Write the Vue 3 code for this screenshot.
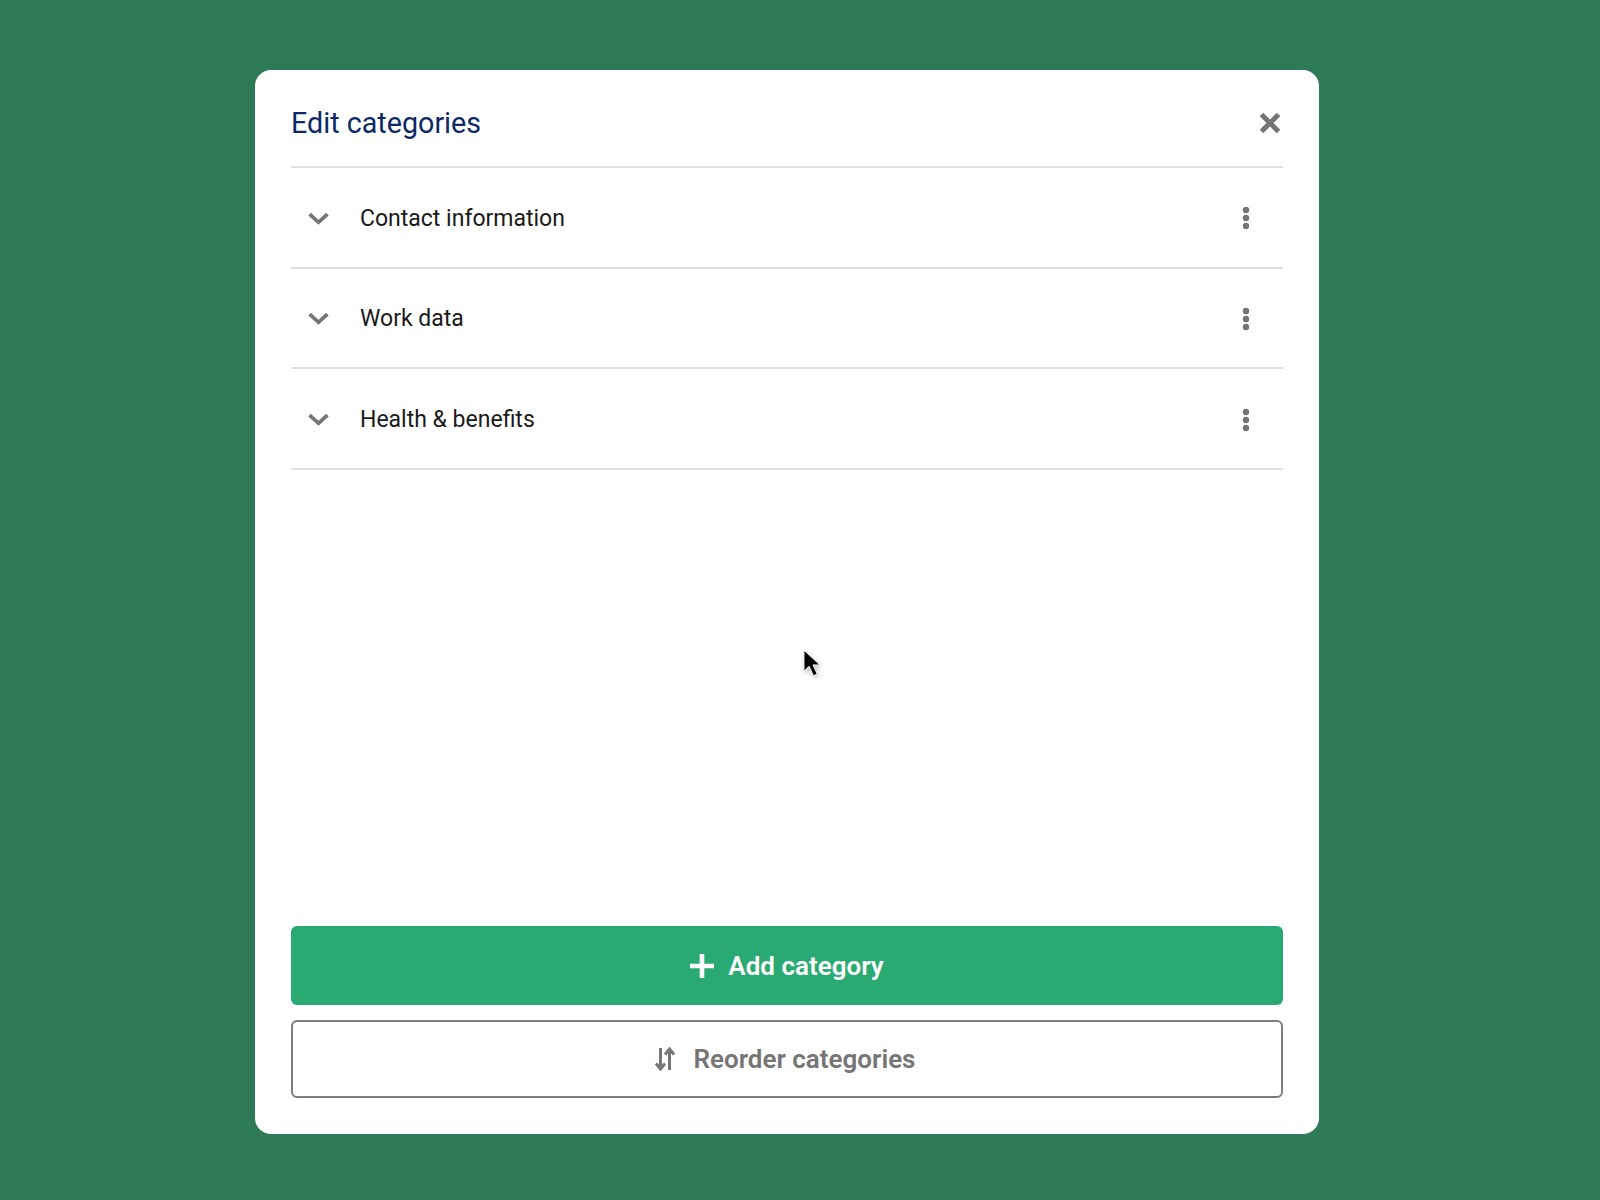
<script setup>
const categories = ['Contact information', 'Work data', 'Health & benefits']
</script>

<template>
  <div class="page">
    <section class="card">
      <header class="head">
        <h1 class="title">Edit categories</h1>
        <svg class="close" viewBox="0 0 24 24" width="24" height="24">
          <path d="M3.5 3.5 20.5 20.5M20.5 3.5 3.5 20.5" fill="none" stroke="#757575" stroke-width="5" />
        </svg>
      </header>
      <ul class="list">
        <li v-for="c in categories" :key="c" class="row">
          <svg class="chev" viewBox="0 0 20 12" width="21" height="13">
            <path d="M1.500 1.800 10 9.600 18.500 1.800" fill="none" stroke="#757575" stroke-width="3.600" />
          </svg>
          <span class="name">{{ c }}</span>
          <svg class="dots" viewBox="0 0 8 24" width="8" height="24">
            <circle cx="4" cy="4" r="3.200" fill="#757575" />
            <circle cx="4" cy="12" r="3.200" fill="#757575" />
            <circle cx="4" cy="20" r="3.200" fill="#757575" />
          </svg>
        </li>
      </ul>
      <div class="actions">
        <button class="btn primary">
          <svg viewBox="0 0 24 24" width="24" height="24">
            <path d="M12 1V23M1 12H23" fill="none" stroke="#fff" stroke-width="4.600" stroke-linecap="round" />
          </svg>
          Add category
        </button>
        <button class="btn outline">
          <svg viewBox="0 0 20 24" width="20" height="24">
            <path d="M5.500 1V21M1 16.500 5.500 22 10 16.500M14.500 23V3M10 7.500 14.500 2 19 7.500" fill="none" stroke="#757575" stroke-width="3" />
          </svg>
          Reorder categories
        </button>
      </div>
    </section>
    <svg class="cursor" viewBox="0 0 20 30" width="19" height="29">
      <path d="M1 1V23L6.500 18 11 28 15 26 10.500 16.500H18Z" fill="#000" stroke="#fff" stroke-width="1" />
    </svg>
  </div>
</template>

<style scoped>
.page {
  position: relative;
  box-sizing: border-box;
  width: 1600px;
  height: 1200px;
  padding: 70px 0 0 255px;
  background: #2f7a56;
  font-family: Roboto, "Liberation Sans", sans-serif;
  overflow: hidden;
}
.card {
  box-sizing: border-box;
  width: 1064px;
  height: 1064px;
  padding: 0 36px 36px;
  background: #fff;
  border-radius: 16px;
  display: flex;
  flex-direction: column;
}
.head {
  height: 98px;
  display: flex;
  align-items: center;
  justify-content: space-between;
  padding: 9px 1px 0 0;
  box-sizing: border-box;
  border-bottom: 2px solid #e0e0e0;
}
.title {
  margin: 0;
  font-size: 28.7px;
  font-weight: 400;
  color: #0d2a66;
}
.list {
  list-style: none;
  margin: 0;
  padding: 0;
}
.row {
  box-sizing: border-box;
  height: 100.67px;
  display: flex;
  align-items: center;
  padding: 2px 33.5px 0 17px;
  border-bottom: 2px solid #e0e0e0;
}
.chev { flex: none; }
.name {
  flex: 1;
  margin-left: 31px;
  font-size: 23px;
  color: #1a1a1a;
}
.dots { flex: none; }
.actions {
  margin-top: auto;
  display: flex;
  flex-direction: column;
  gap: 15px;
}
.btn {
  box-sizing: border-box;
  height: 78px;
  display: flex;
  align-items: center;
  justify-content: center;
  font-family: inherit;
  font-size: 26px;
  font-weight: 600;
  border-radius: 6px;
}
.primary {
  gap: 14px;
  height: 79px;
  padding-top: 2px;
  border: 0;
  background: #2aaa73;
  color: #fff;
}
.outline {
  gap: 18px;
  padding-right: 9px;
  background: #fff;
  border: 2px solid #7d7d7d;
  color: #757575;
}
.cursor {
  position: absolute;
  left: 803px;
  top: 649px;
  filter: drop-shadow(1px 2px 2px rgba(0, 0, 0, 0.25));
}
</style>
